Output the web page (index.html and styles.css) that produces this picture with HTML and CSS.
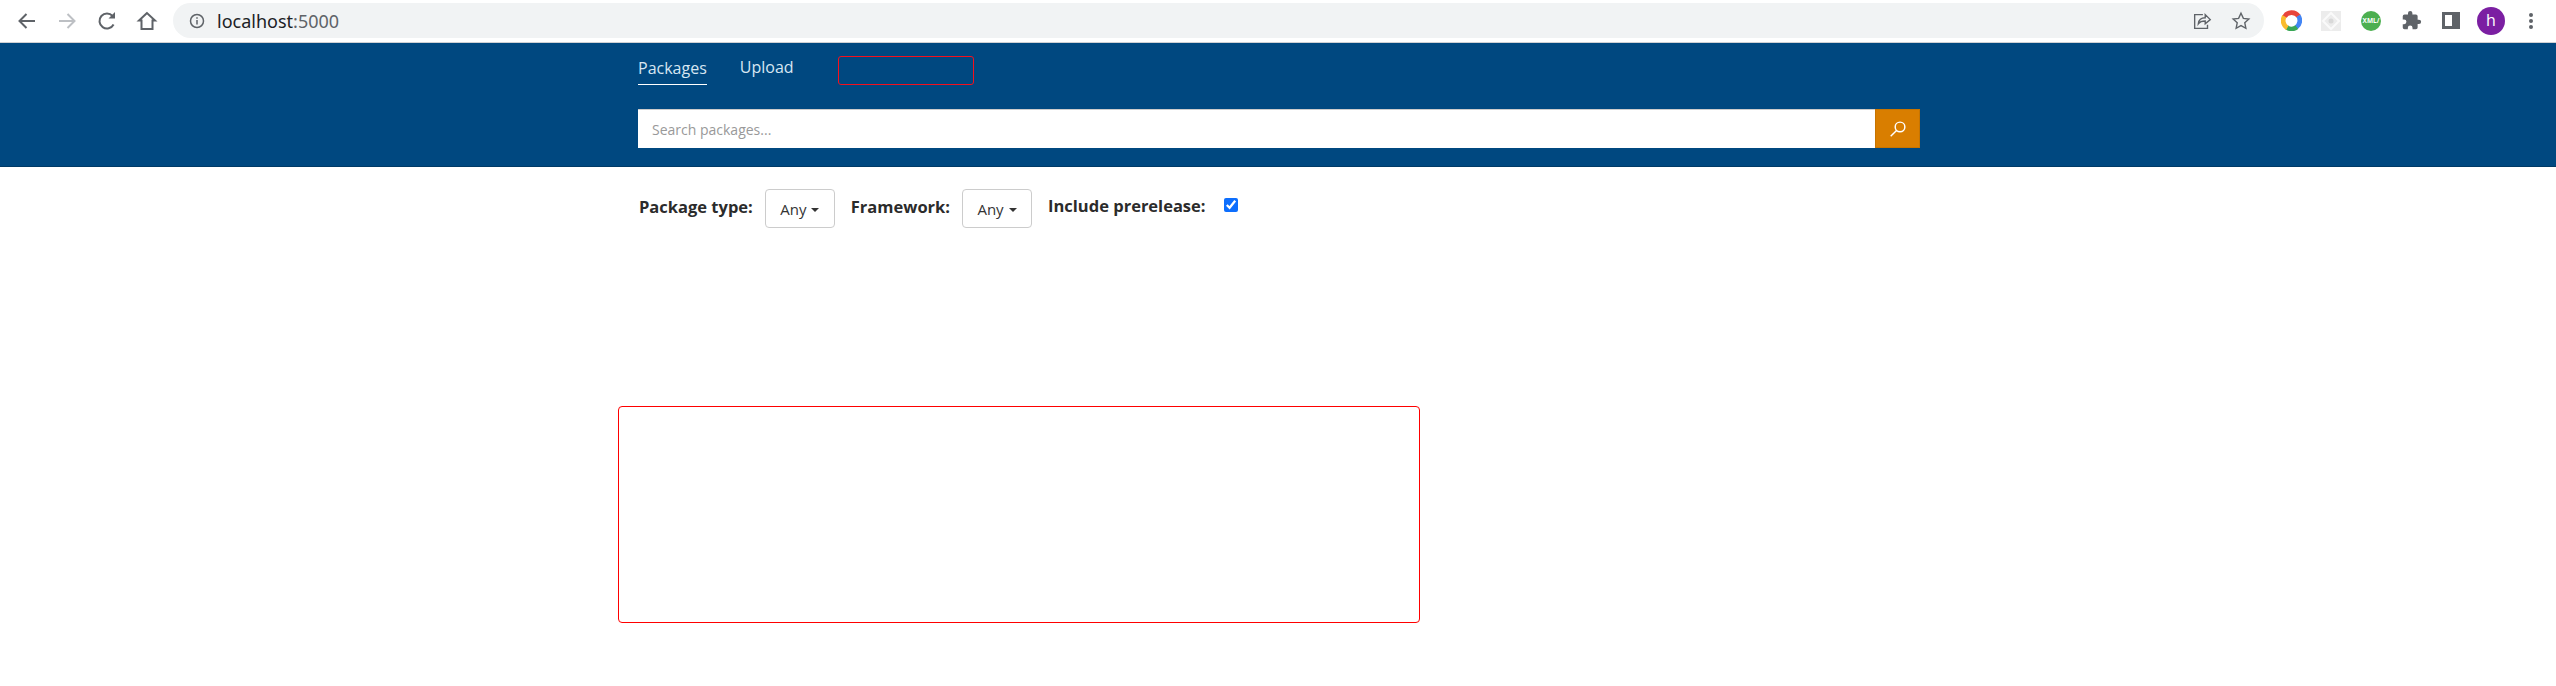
FILE: index.html
```html
<!DOCTYPE html>
<html lang="en">
<head>
<meta charset="utf-8">
<title>localhost:5000</title>
<link rel="stylesheet" href="styles.css">
</head>
<body>
	<!-- Browser toolbar -->
	<div class="toolbar">
		<svg class="tool back" viewBox="0 0 24 24"><path d="M20 12H5M11.500 5 4.500 12l7 7"/></svg>
		<svg class="tool forward" viewBox="0 0 24 24"><path d="M4 12h15M12.500 5l7 7-7 7"/></svg>
		<svg class="tool reload" viewBox="0 0 24 24"><path d="M18.600 15.500A7.500 7.500 0 1 1 17.600 7"/><path class="solid" d="M20 3v6.500h-6.500z"/></svg>
		<svg class="tool home" viewBox="0 0 24 24"><path d="M12 4 4 11.500h2.500V20h11v-8.500H20z"/></svg>
		<div class="omnibox">
			<div class="url">
				<svg class="info" viewBox="0 0 16 16"><circle cx="8" cy="8" r="6.500"/><path d="M8 7v4.500M8 4.300v1.400"/></svg>
				<span class="host">localhost</span><span class="port">:5000</span>
			</div>
			<div class="url_actions">
				<svg class="tool share" viewBox="0 0 24 24"><path d="M13 5H4v15h14v-4M8 15c.500-4.500 3.500-6.500 7.500-6.500V5L21 10.500 15.500 15v-3C12 12 9.500 13 8 15z"/></svg>
				<svg class="tool star" viewBox="0 0 24 24"><path d="m12 3.500 2.600 5.600 6 .7-4.500 4.100 1.200 6L12 17l-5.300 2.900 1.200-6-4.500-4.100 6-.7z"/></svg>
			</div>
		</div>
		<div class="extensions">
			<svg class="ext" viewBox="0 0 20 20">
				<path class="ring_r" d="M3.200 6.500A8 8 0 0 1 16.800 6"/>
				<path class="ring_b" d="M16.500 5.500A8 8 0 0 1 14.500 16.600"/>
				<path class="ring_g" d="M15 16.300A8 8 0 0 1 5.500 16.600"/>
				<path class="ring_y" d="M3.200 6A8 8 0 0 0 6 17"/>
			</svg>
			<svg class="ext ext_grey" viewBox="0 0 20 20">
				<rect width="20" height="20" fill="#ececec"/>
				<path d="M10 2 18 10 10 18 2 10z" fill="none" stroke="#fafafa" stroke-width="2"/>
				<circle cx="10" cy="10" r="2.500" fill="#d8d8d8"/>
			</svg>
			<div class="ext_xml">XML/</div>
			<svg class="ext puzzle" viewBox="0 0 24 24"><path d="M20.500 11H19V7a2 2 0 0 0-2-2h-4V3.500a2.500 2.500 0 0 0-5 0V5H4a2 2 0 0 0-2 2v3.800h1.500a2.700 2.700 0 0 1 0 5.400H2V20a2 2 0 0 0 2 2h3.800v-1.500a2.700 2.700 0 0 1 5.400 0V22H17a2 2 0 0 0 2-2v-4h1.500a2.500 2.500 0 0 0 0-5z"/></svg>
			<div class="side_panel"></div>
			<div class="avatar">h</div>
			<div class="kebab"><i></i><i></i><i></i></div>
		</div>
	</div>

	<header class="site_header">
		<div class="container">
			<nav class="nav">
				<a class="nav_link active">Packages</a>
				<a class="nav_link">Upload</a>
				<div class="redacted"></div>
			</nav>
			<div class="search">
				<input class="search_input" type="text" placeholder="Search packages...">
				<button class="search_btn">
					<svg viewBox="0 0 16 16"><circle cx="9.800" cy="6.200" r="4.300"/><path d="M6.700 9.300 1.500 14.500"/></svg>
				</button>
			</div>
		</div>
	</header>

	<main class="container">
		<div class="filters">
			<label class="filter_label">Package type:</label>
			<button class="dropdown">Any<span class="caret"></span></button>
			<label class="filter_label">Framework:</label>
			<button class="dropdown">Any<span class="caret"></span></button>
			<label class="filter_label include">Include prerelease:</label>
			<input class="prerelease" type="checkbox" checked>
		</div>
		<div class="blank_box"></div>
	</main>
</body>
</html>
```

FILE: styles.css
```css
* {
	box-sizing: border-box;
}

html, body {
	margin: 0;
	padding: 0;
	background-color: white;
	font-family: "Open Sans", "Noto Sans", sans-serif;
	overflow: hidden;
}

.toolbar {
	display: flex;
	align-items: center;
	height: 43px;
	padding: 0 0 1px 15px;
	background-color: white;
	border-bottom: 1px solid #cfd1d4;
}

.tool {
	flex: none;
	width: 24px;
	height: 24px;
	margin-right: 16px;
	fill: none;
	stroke: #5f6368;
	stroke-width: 2;
}

.tool .solid {
	fill: #5f6368;
	stroke: none;
}

.forward {
	stroke: #bdc0c4;
}

.omnibox {
	flex: none;
	display: flex;
	justify-content: space-between;
	align-items: center;
	width: 2091px;
	height: 35px;
	margin-left: -2px;
	padding: 0 12px 0 16px;
	background-color: #f1f3f4;
	border-radius: 18px;
}

.url {
	display: flex;
	align-items: center;
	font-family: "Noto Sans", sans-serif;
	font-size: 18px;
}

.info {
	width: 16px;
	height: 16px;
	margin-right: 12px;
	fill: none;
	stroke: #5f6368;
	stroke-width: 1.500;
}

.host {
	color: #202124;
}

.port {
	color: #5f6368;
}

.url_actions {
	display: flex;
}

.url_actions .tool {
	width: 22px;
	height: 22px;
	margin: 0 0 0 17px;
	stroke-width: 1.500;
}

.extensions {
	display: grid;
	grid-template-columns: repeat(7, 40px);
	align-items: center;
	justify-items: center;
	margin-left: 7px;
}

.ext {
	width: 21px;
	height: 21px;
}

.ext_grey {
	width: 20px;
	height: 20px;
}

.ring_r, .ring_y, .ring_g, .ring_b {
	fill: none;
	stroke-width: 4.500;
}

.ring_r {
	stroke: #e8453c;
}

.ring_b {
	stroke: #4285f4;
}

.ring_y {
	stroke: #f9bb2d;
}

.ring_g {
	stroke: #3aa757;
}

.ext_xml {
	width: 20px;
	height: 20px;
	background-color: #4caf50;
	border-radius: 50%;
	color: white;
	font-size: 6.500px;
	font-weight: 700;
	line-height: 20px;
	text-align: center;
}

.puzzle {
	fill: #5f6368;
}

.side_panel {
	width: 18px;
	height: 17px;
	border: 3px solid #5f6368;
	border-right-width: 8px;
}

.avatar {
	width: 28px;
	height: 28px;
	background-color: #7b1fa2;
	border-radius: 50%;
	color: white;
	font-size: 16px;
	line-height: 27px;
	text-align: center;
}

.kebab {
	display: flex;
	flex-direction: column;
	gap: 2px;
}

.kebab i {
	width: 4px;
	height: 4px;
	background-color: #5f6368;
	border-radius: 50%;
}

.container {
	width: 1282px;
	margin-left: 638px;
}

.site_header {
	height: 124px;
	background-color: #004880;
	border-bottom: 1px solid #003a66;
}

.nav {
	display: flex;
	height: 66px;
	padding-top: 13px;
}

.nav_link {
	height: 29px;
	margin: -1px 33px 0 0;
	color: #d7e6f2;
	font-size: 16px;
	line-height: 24px;
}

.nav_link.active {
	margin-top: 0;
	border-bottom: 1px solid white;
}

.redacted {
	width: 136px;
	height: 29px;
	margin-left: 11px;
	border: 1px solid #f5101c;
	border-radius: 3px;
}

.search {
	display: flex;
	height: 39px;
}

.search_input {
	flex: 1;
	height: 39px;
	padding: 0 14px;
	border: 0;
	border-top: 1px solid #ccc;
	font-family: inherit;
	font-size: 14px;
	outline: 0;
}

.search_input::placeholder {
	color: #999;
}

.search_btn {
	display: flex;
	align-items: center;
	justify-content: center;
	width: 45px;
	height: 39px;
	padding: 0;
	background-color: #d97e00;
	border: 1px solid #c77400;
}

.search_btn svg {
	width: 18px;
	height: 18px;
	fill: none;
	stroke: white;
	stroke-width: 1.300;
}

.filters {
	display: flex;
	align-items: flex-start;
	height: 239px;
	padding: 22px 0 0 1px;
}

.filter_label {
	margin-right: 12px;
	color: #2b2b2b;
	font-size: 16.500px;
	font-weight: 700;
	line-height: 36px;
}

.filter_label.include {
	margin-right: 18px;
	line-height: 34px;
}

.dropdown {
	width: 70px;
	height: 39px;
	margin-right: 16px;
	padding: 0;
	background-color: white;
	border: 1px solid #ccc;
	border-radius: 4px;
	color: #333;
	font-family: inherit;
	font-size: 15px;
}

.caret {
	display: inline-block;
	margin-left: 5px;
	vertical-align: middle;
	border-top: 4px solid #333;
	border-left: 4px solid transparent;
	border-right: 4px solid transparent;
}

.prerelease {
	width: 14px;
	height: 14px;
	margin: 9px 0 0 0;
	accent-color: #0d6efd;
}

.blank_box {
	width: 802px;
	height: 217px;
	margin-left: -20px;
	border: 1px solid #f00;
	border-radius: 4px;
}
```
